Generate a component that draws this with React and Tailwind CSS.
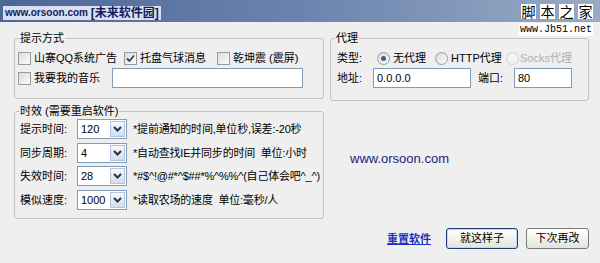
import React from 'react';

const FONT = { fontFamily: '"Liberation Sans", "Noto Sans CJK SC", sans-serif' };

const Checkbox = ({ checked }) => (
    <span className="w-[13px] h-[13px] shrink-0 border border-[#9a9b9b] bg-gradient-to-br from-[#dcdcd6] to-[#fbfbf9] flex items-center justify-center">
        {checked && (
            <svg width="9" height="9" viewBox="0 0 9 9">
                <path d="M1 4.5 L3.5 7 L8 1.5" fill="none" stroke="#2f4468" strokeWidth="1.8" />
            </svg>
        )}
    </span>
);

const Radio = ({ checked, disabled }) => (
    <span className={`w-[13px] h-[13px] shrink-0 rounded-full border flex items-center justify-center ${disabled ? 'border-[#cfcfcf] bg-[#f3f3f3]' : 'border-[#9a9b9b] bg-gradient-to-br from-[#dcdcd6] to-[#fbfbf9]'}`}>
        {checked && <span className="w-[5px] h-[5px] rounded-full bg-[#3a5f9e]"></span>}
    </span>
);

const Select = ({ value }) => (
    <div className="w-[50px] h-[20px] shrink-0 border border-[#7f9db9] bg-white flex items-center">
        <span className="flex-1 pl-[3px] text-[11px]">{value}</span>
        <span className="w-[15px] h-[16px] mr-[1px] border border-[#b5c3da] bg-gradient-to-b from-[#f6f8fc] to-[#d5ddeb] flex items-center justify-center">
            <svg width="9" height="6" viewBox="0 0 9 6">
                <path d="M1 1 L4.5 4.5 L8 1" fill="none" stroke="#23354f" strokeWidth="2" />
            </svg>
        </span>
    </div>
);

const Group = ({ title, className, children }) => (
    <fieldset className={`border border-[#c3c3c3] rounded-[3px] px-[3px] ${className}`}>
        <legend className="ml-[1px] px-[1px] text-[11px] leading-[14px]">{title}</legend>
        {children}
    </fieldset>
);

const timeRows = [
    { label: '提示时间:', value: '120', desc: '*提前通知的时间,单位秒,误差:-20秒' },
    { label: '同步周期:', value: '4', desc: '*自动查找IE并同步的时间  单位:小时' },
    { label: '失效时间:', value: '28', desc: '*#$^!@#*^$##*%^%%^(自己体会吧^_^)' },
    { label: '模似速度:', value: '1000', desc: '*读取农场的速度  单位:毫秒/人' },
];

export default function App() {
    return (
        <div className="w-[600px] h-[263px] bg-[#efefef] relative overflow-hidden text-black" style={FONT}>
            {/* Title bar */}
            <div className="h-[22px] bg-gradient-to-r from-[#4b6794] via-[#6a84ae] to-[#9aaac4] flex items-center pl-[3px]">
                <div className="h-[14px] mt-[4px] px-[2px] bg-[#dadef0] flex items-center font-bold text-[#101c5c] leading-[14px]">
                    <span className="text-[10px]">www.orsoon.com&nbsp;</span>
                    <span className="text-[12px]">[未来软件园]</span>
                </div>
            </div>

            {/* Body */}
            <div className="flex gap-[6px] pl-[14px] pt-[9px]">
                {/* Left column */}
                <div className="w-[310px] flex flex-col gap-[5px]">
                    <Group title="提示方式" className="h-[68px]">
                        <div className="flex flex-col gap-[3px] pt-[6px] text-[11px] leading-[14px]">
                            <div className="flex items-center h-[14px]">
                                <label className="w-[106px] flex items-center gap-[3px]"><Checkbox />山寨QQ系统广告</label>
                                <label className="w-[93px] flex items-center gap-[3px]"><Checkbox checked />托盘气球消息</label>
                                <label className="flex items-center gap-[3px]"><Checkbox />乾坤震 (震屏)</label>
                            </div>
                            <div className="flex items-center h-[20px]">
                                <label className="w-[94px] flex items-center gap-[3px]"><Checkbox />我要我的音乐</label>
                                <div className="w-[191px] h-[20px] border border-[#7f9db9] bg-white"></div>
                            </div>
                        </div>
                    </Group>

                    <Group title="时效 (需要重启软件)" className="h-[115px]">
                        <div className="flex flex-col gap-[3.5px] pt-[1px] text-[11px] leading-[14px]">
                            {timeRows.map(row => (
                                <div key={row.label} className="flex items-center h-[20px]">
                                    <span className="w-[59px] pl-[2px]">{row.label}</span>
                                    <Select value={row.value} />
                                    <span className="ml-[6px] whitespace-pre tracking-[-0.2px]">{row.desc}</span>
                                </div>
                            ))}
                        </div>
                    </Group>
                </div>

                {/* Right column */}
                <div className="w-[259px] flex flex-col">
                    <Group title="代理" className="h-[70px]">
                        <div className="flex flex-col gap-[3px] pt-[6px] pl-[3px] text-[11px] leading-[14px]">
                            <div className="flex items-center h-[14px]">
                                <span className="w-[40px]">类型:</span>
                                <label className="w-[58px] flex items-center gap-[3px]"><Radio checked />无代理</label>
                                <label className="w-[71px] flex items-center gap-[3px]"><Radio />HTTP代理</label>
                                <label className="flex items-center gap-[1px] text-[#b0b0b0]"><Radio disabled />Socks代理</label>
                            </div>
                            <div className="flex items-center h-[20px]">
                                <span className="w-[36px]">地址:</span>
                                <div className="w-[98px] h-[20px] border border-[#7f9db9] bg-white pl-[3px] flex items-center">0.0.0.0</div>
                                <span className="w-[36px] ml-[7px]">端口:</span>
                                <div className="w-[58px] h-[20px] border border-[#7f9db9] bg-white pl-[3px] flex items-center">80</div>
                            </div>
                        </div>
                    </Group>

                    <div className="mt-[50px] ml-[20px] text-[13px] leading-[16px] text-[#1b1b7a]">www.orsoon.com</div>

                    <div className="mt-[61px] flex items-center justify-end gap-[8px] text-[11px]">
                        <a className="mr-[7px] font-bold text-[#1f2fc0] underline leading-[14px]">重置软件</a>
                        <button className="w-[72px] h-[21px] rounded-[3px] border border-[#1f3f73] bg-gradient-to-b from-[#ffffff] to-[#e4e4de] shadow-[inset_0_0_0_1px_#c6d6ef]">就这样子</button>
                        <button className="w-[63px] h-[21px] rounded-[3px] border border-[#7a7a7a] bg-gradient-to-b from-[#ffffff] to-[#e4e4de]">下次再改</button>
                    </div>
                </div>
            </div>

            {/* Watermark overlay */}
            <div className="absolute top-[4px] right-[7px] flex flex-col items-end gap-[4px]">
                <div className="flex gap-[4px]">
                    {['脚', '本', '之', '家'].map(c => (
                        <span key={c} className="w-[15px] h-[15px] bg-white flex items-center justify-center text-[14px] leading-[15px]" style={{ fontFamily: '"Noto Sans CJK SC", sans-serif' }}>{c}</span>
                    ))}
                </div>
                <span className="bg-white px-[1px] text-[10px] leading-[13px]" style={{ fontFamily: '"Liberation Mono", monospace' }}>www.Jb51.net</span>
            </div>
        </div>
    );
}
